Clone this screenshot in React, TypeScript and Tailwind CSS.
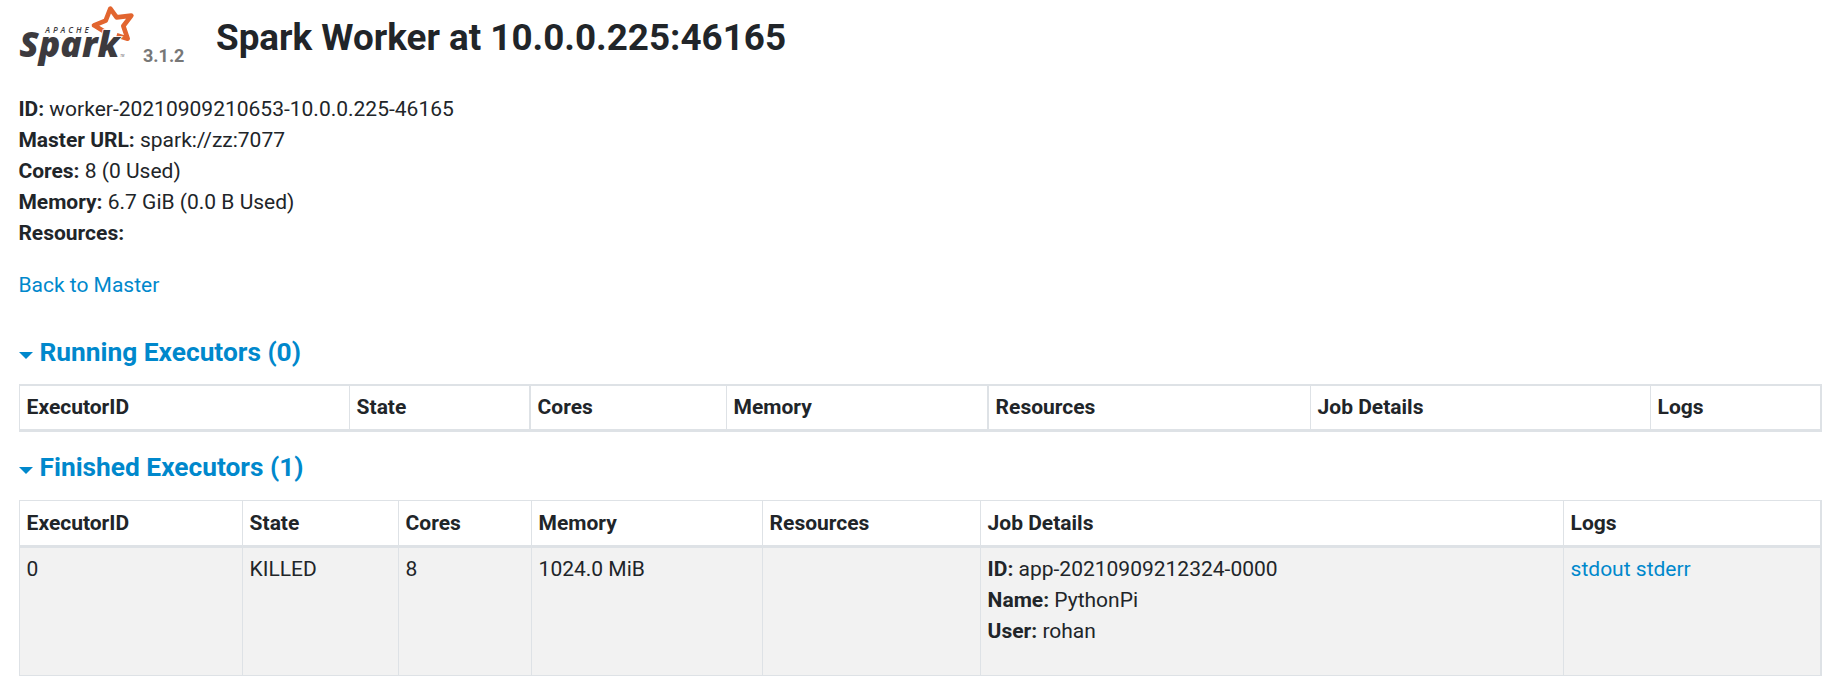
import type { ReactNode } from "react";

const workerInfo = [
  ["ID:", "worker-20210909210653-10.0.0.225-46165"],
  ["Master URL:", "spark://zz:7077"],
  ["Cores:", "8 (0 Used)"],
  ["Memory:", "6.7 GiB (0.0 B Used)"],
  ["Resources:", ""],
];

const jobInfo = [
  ["ID:", "app-20210909212324-0000"],
  ["Name:", "PythonPi"],
  ["User:", "rohan"],
];

const runningColumns = [
  { label: "ExecutorID", border: "border-r" },
  { label: "State", border: "border-r-2" },
  { label: "Cores", border: "border-r" },
  { label: "Memory", border: "border-r-2" },
  { label: "Resources", border: "border-r" },
  { label: "Job Details", border: "border-r" },
  { label: "Logs", border: "border-r-2" },
];

const finishedColumns = [
  { label: "ExecutorID", border: "border-r" },
  { label: "State", border: "border-r" },
  { label: "Cores", border: "border-r" },
  { label: "Memory", border: "border-r" },
  { label: "Resources", border: "border-r" },
  { label: "Job Details", border: "border-r" },
  { label: "Logs", border: "border-r-2" },
];

function SparkLogo() {
  return (
    <svg className="h-[61px] w-[117px] shrink-0 overflow-visible" viewBox="57 15 351 183" role="img" aria-label="Apache Spark">
      <path
        d="M350 106 L383 116 L370 78 L394 47 L350 52 L331 26 L317 62 L282 76 L314 95"
        fill="none"
        stroke="#e2652f"
        strokeWidth="14"
        strokeLinejoin="round"
      />
      <g fontFamily="'Open Sans', sans-serif" fontStyle="italic">
        <text
          x="58"
          y="171"
          fontSize="106"
          fontWeight="800"
          fill="#3c3a3e"
          stroke="#fff"
          strokeWidth="5"
          paintOrder="stroke"
          textLength="300"
          lengthAdjust="spacingAndGlyphs"
        >
          Spark
        </text>
        <text x="136" y="98" fontSize="24" fontWeight="600" fill="#3c3a3e" textLength="130">
          APACHE
        </text>
        <text x="361" y="172" fontSize="9" fill="#3c3a3e">
          TM
        </text>
      </g>
    </svg>
  );
}

function SectionTitle({ children }: { children: ReactNode }) {
  return (
    <h4 className="flex h-[31px] items-center text-[26.3px] leading-[31px] font-bold text-[#0088cc]">
      <span className="mt-[5px] mr-[6.5px] h-0 w-0 border-x-[7.5px] border-t-[7px] border-x-transparent border-t-[#0088cc]" />
      {children}
    </h4>
  );
}

function InfoList({ items }: { items: string[][] }) {
  return (
    <ul>
      {items.map(([label, value]) => (
        <li key={label}>
          <strong className="font-bold">{label}</strong> {value}
        </li>
      ))}
    </ul>
  );
}

function Cell({ border, className = "", children }: { border: string; className?: string; children?: ReactNode }) {
  return <div className={`${border} ${className} border-[#dee2e6] px-[6.6px]`}>{children}</div>;
}

export default function App() {
  return (
    <div className="min-h-[696px] bg-white pl-[19px] font-[Roboto,sans-serif] text-[21px] leading-[31px] text-[#212529]">
      <header className="flex h-[66px] items-start pt-[5px]">
        <SparkLogo />
        <span className="mt-[35px] ml-[7px] w-[73px] text-[18px] leading-[31px] font-bold text-[#777]">3.1.2</span>
        <h3 className="mt-[11px] text-[36.8px] leading-[43px] font-bold">Spark Worker at 10.0.0.225:46165</h3>
      </header>

      <main className="w-[1803px]">
        <div className="-ml-[0.6px] pt-[28px]">
          <InfoList items={workerInfo} />
          <p className="mt-[21px]">
            <a href="#" className="text-[#0088cc]">Back to Master</a>
          </p>
        </div>

        <div className="mt-[36px]">
          <SectionTitle>Running Executors (0)</SectionTitle>
        </div>
        <div className="mt-[16px] grid h-[48px] grid-cols-[330px_181px_196px_262px_322px_340px_171px] border-t-2 border-b-[3px] border-l border-[#dee2e6] font-bold">
          {runningColumns.map((column) => (
            <Cell key={column.label} border={column.border} className="pt-[6px]">
              {column.label}
            </Cell>
          ))}
        </div>

        <div className="mt-[20px]">
          <SectionTitle>Finished Executors (1)</SectionTitle>
        </div>
        <div className="mt-[17px] border-t border-b border-l border-[#dee2e6]">
          <div className="grid h-[47px] grid-cols-[223px_156px_133px_231px_218px_583px_258px] border-b-[3px] border-[#dee2e6] font-bold">
            {finishedColumns.map((column) => (
              <Cell key={column.label} border={column.border} className="pt-[7px]">
                {column.label}
              </Cell>
            ))}
          </div>
          <div className="grid h-[127px] grid-cols-[223px_156px_133px_231px_218px_583px_258px] bg-[#f2f2f2]">
            <Cell border="border-r" className="pt-[6px]">0</Cell>
            <Cell border="border-r" className="pt-[6px]">KILLED</Cell>
            <Cell border="border-r" className="pt-[6px]">8</Cell>
            <Cell border="border-r" className="pt-[6px]">1024.0 MiB</Cell>
            <Cell border="border-r" />
            <Cell border="border-r" className="pt-[6px]">
              <InfoList items={jobInfo} />
            </Cell>
            <Cell border="border-r-2" className="pt-[6px]">
              <a href="#" className="text-[#0088cc]">stdout</a> <a href="#" className="text-[#0088cc]">stderr</a>
            </Cell>
          </div>
        </div>
      </main>
    </div>
  );
}
